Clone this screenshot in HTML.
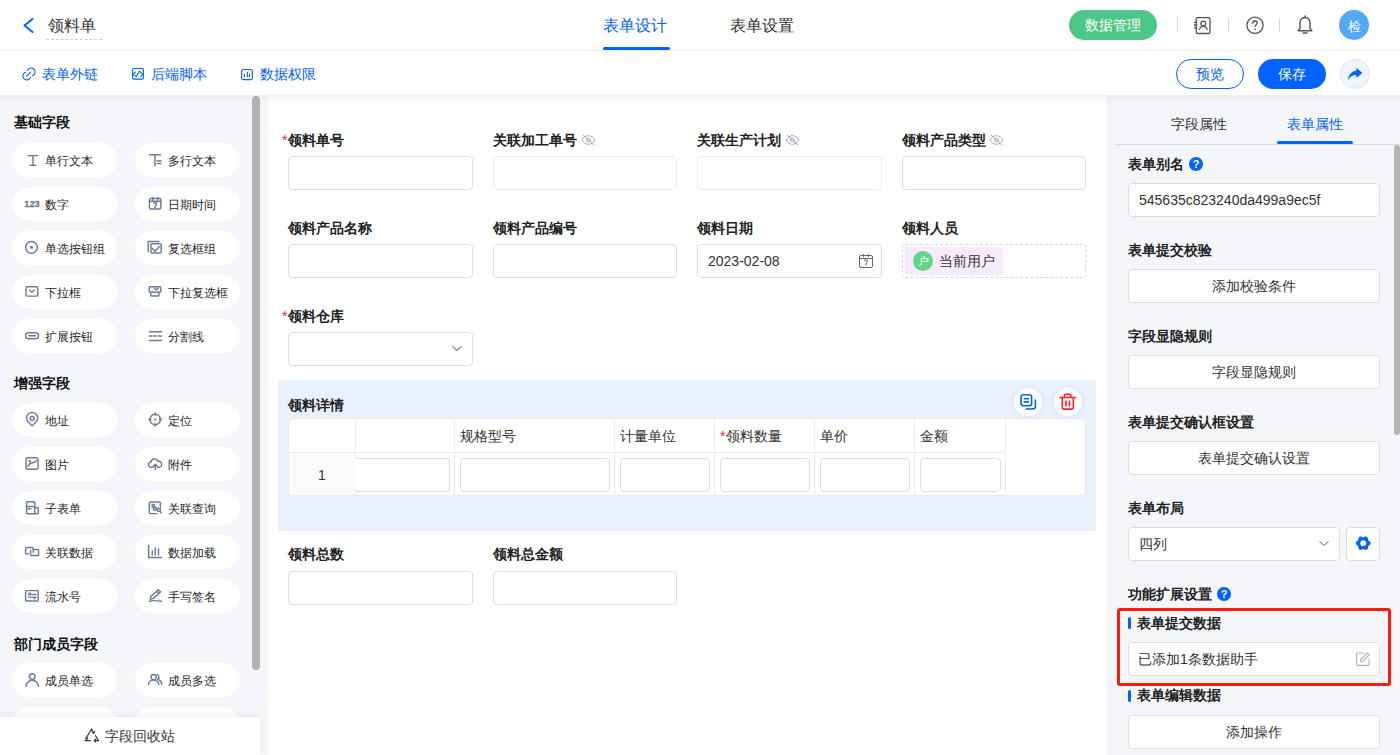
<!DOCTYPE html>
<html><head><meta charset="utf-8">
<style>
*{box-sizing:border-box;margin:0;padding:0}
html,body{width:1400px;height:755px;overflow:hidden;background:#fff;font-family:"Liberation Sans",sans-serif;color:#333}
.a{position:absolute}
.t14{font-size:14px;line-height:14px;white-space:nowrap}
.t12{font-size:12px;line-height:12px;white-space:nowrap}
.t16{font-size:16px;line-height:16px;white-space:nowrap}
.b{font-weight:bold}
svg{display:block}
/* header */
#hdr{left:0;top:0;width:1400px;height:51px;border-bottom:1px solid #ebebeb;background:#fff}
#tb{left:0;top:51px;width:1400px;height:44px;background:#fff}
.blue{color:#0062ff}
.sep{width:1px;height:14px;background:#d8d8d8;top:18px}
/* sidebar */
#side{left:0;top:95px;width:268px;height:660px;background:#f4f6fa}
.pill{width:105px;height:34px;border-radius:17px;background:#fff}
.pill .ic{position:absolute;left:13px;top:10px;width:14px;height:14px}
.pill .lb{position:absolute;left:33px;top:11px;font-size:12px;line-height:12px;color:#333;white-space:nowrap}
.stitle{font-size:14px;line-height:14px;font-weight:bold;color:#111;white-space:nowrap}
/* canvas */
#canvas{left:268px;top:95px;width:838px;height:660px;background:#fff}
.lbl{font-size:14px;line-height:14px;font-weight:bold;color:#222;white-space:nowrap}
.inp{height:34px;border:1px solid #dedede;border-radius:4px;background:#fff}
.plb{font-size:12px;line-height:12px;color:#1f1f1f;white-space:nowrap}
.req{font-size:14px;line-height:14px;color:#f5222d}
.rlbl{font-size:14px;line-height:14px;font-weight:bold;color:#222;white-space:nowrap}
/* right */
#right{left:1106px;top:95px;width:294px;height:660px;background:#f4f6fa}
.rbtn{left:1128px;width:252px;height:34px;border:1px solid #dedede;border-radius:4px;background:#fff;text-align:center;font-size:14px;line-height:32px;color:#333}
</style></head><body>

<!-- HEADER -->
<div id="hdr" class="a"></div>
<svg class="a" style="left:22px;top:17px" width="13" height="17" viewBox="0 0 13 17"><path d="M10.5 2 L2.5 8.5 L10.5 15" fill="none" stroke="#0062ff" stroke-width="2" stroke-linecap="round" stroke-linejoin="round"/></svg>
<div class="a t16" style="left:48px;top:18px;color:#333">领料单</div>
<div class="a" style="left:46px;top:39px;width:56px;height:1px;border-top:1px dashed #cfcfcf"></div>

<div class="a t16 blue" style="left:603px;top:18px">表单设计</div>
<div class="a" style="left:603px;top:47px;width:67px;height:3px;background:#0062ff;border-radius:2px"></div>
<div class="a t16" style="left:730px;top:18px;color:#333">表单设置</div>

<div class="a" style="left:1069px;top:10px;width:88px;height:30px;border-radius:15px;background:#4cc787"></div>
<div class="a t14" style="left:1085px;top:18px;color:#fff">数据管理</div>
<div class="a sep" style="left:1177px"></div>
<div class="a sep" style="left:1228px"></div>
<div class="a sep" style="left:1279px"></div>
<svg class="a" style="left:1193px;top:16px" width="20" height="19" viewBox="0 0 20 19" fill="none" stroke="#555" stroke-width="1.3"><rect x="3.3" y="1.6" width="13.7" height="15.9" rx="1.3"/><circle cx="10.3" cy="7.5" r="2.4"/><path d="M6.4 14c0.4-2.5 1.9-3.7 3.9-3.7s3.5 1.2 3.9 3.7"/><path d="M1 6.3h3.3M1 9h3.3M1 11.8h3.3"/></svg>
<svg class="a" style="left:1245px;top:16px" width="20" height="20" viewBox="0 0 20 20"><circle cx="10" cy="9.3" r="8.1" fill="none" stroke="#555" stroke-width="1.3"/><path d="M7.8 7.3c0-1.4 1-2.3 2.2-2.3s2.2 0.8 2.2 2.1c0 1.6-2.1 1.8-2.1 3.5" fill="none" stroke="#555" stroke-width="1.3" stroke-linecap="round"/><circle cx="10.1" cy="13.3" r="0.85" fill="#555"/></svg>
<svg class="a" style="left:1296px;top:15px" width="18" height="21" viewBox="0 0 18 21"><path d="M9 2.5c-3 0-5 2.3-5 5.3v5.5l-1.8 2.4h13.6L14 13.3V7.8C14 4.8 12 2.5 9 2.5z" fill="none" stroke="#555" stroke-width="1.4" stroke-linejoin="round"/><path d="M9 1v1.5M7 18h4" stroke="#555" stroke-width="1.4" stroke-linecap="round"/></svg>
<div class="a" style="left:1339px;top:10px;width:30px;height:30px;border-radius:15px;background:#52a9f3"></div>
<div class="a" style="left:1347.5px;top:19.5px;font-size:13px;line-height:13px;color:#fff">检</div>

<!-- TOOLBAR -->
<div id="tb" class="a"></div>
<svg class="a" style="left:22px;top:67px" width="14" height="14" viewBox="0 0 14 14" fill="none" stroke="#0062ff" stroke-width="1.1" stroke-linecap="round"><path d="M5.3 3.4A4 4 0 1 1 10.4 8.7"/><path d="M3.5 5.2A4 4 0 1 0 8.5 10.6"/><path d="M4.6 8.8L8.5 5.3"/></svg>
<div class="a t14 blue" style="left:42px;top:67px">表单外链</div>
<svg class="a" style="left:131px;top:67px" width="14" height="14" viewBox="0 0 14 14" fill="none" stroke="#0062ff" stroke-width="1.1" stroke-linecap="round" stroke-linejoin="round"><rect x="1.6" y="1.5" width="10.8" height="10.6" rx="1.3"/><path d="M4.5 5.2L2.1 7.4 5.3 9.6 8.4 4.2 12 7.4 9.5 9.6"/></svg>
<div class="a t14 blue" style="left:151px;top:67px">后端脚本</div>
<svg class="a" style="left:240px;top:67px" width="14" height="14" viewBox="0 0 14 14" fill="none" stroke="#0062ff" stroke-width="1.1" stroke-linecap="round"><rect x="1.6" y="2.5" width="10.8" height="10.1" rx="1.6"/><path d="M4.4 7.4v2.2M7.4 5.4v4.2M9.5 6.7v2.9"/></svg>
<div class="a t14 blue" style="left:260px;top:67px">数据权限</div>

<div class="a" style="left:1176px;top:59px;width:68px;height:30px;border-radius:15px;border:1px solid #0062ff;background:#fff"></div>
<div class="a t14 blue" style="left:1196px;top:67px">预览</div>
<div class="a" style="left:1258px;top:59px;width:68px;height:30px;border-radius:15px;background:#0062ff"></div>
<div class="a t14" style="left:1278px;top:67px;color:#fff;font-weight:500">保存</div>
<div class="a" style="left:1340px;top:59px;width:30px;height:30px;border-radius:15px;background:#f0f5ff;border:1px solid #dde7fb"></div>
<svg class="a" style="left:1347px;top:66px" width="16" height="16" viewBox="0 0 16 16"><path d="M9.4 1.7L15.3 6.9 9.4 12V8.9C5.5 8.9 2.8 10.5 1 14.2 1.6 9.3 4.5 5.2 9.4 4.6z" fill="#0062ff"/></svg>

<!-- SIDEBAR -->
<div id="side" class="a"></div>
<div class="a" style="left:252px;top:96px;width:8px;height:574px;border-radius:4px;background:#b3b3b3"></div>
<div class="a stitle" style="left:14px;top:115px">基础字段</div>
<div class="a pill" style="left:12px;top:143px"></div>
<div class="a pill" style="left:135px;top:143px"></div>
<svg class="a" style="left:20px;top:150px" width="25" height="20" viewBox="0 0 25 20" fill="none" stroke="#6e7c99" stroke-width="1.45" stroke-linecap="round" stroke-linejoin="round"><path d="M8 5.6h9.7M13 5.6v9.7M10.2 15.3h5.6"/></svg>
<div class="a plb" style="left:45px;top:155px">单行文本</div>
<svg class="a" style="left:143px;top:150px" width="25" height="20" viewBox="0 0 25 20" fill="none" stroke="#6e7c99" stroke-width="1.45" stroke-linecap="round" stroke-linejoin="round"><path d="M6.4 4.7h11.2M11.9 4.7v11M14 11h4.2M14 13.6h4.2"/></svg>
<div class="a plb" style="left:168px;top:155px">多行文本</div>
<div class="a pill" style="left:12px;top:187px"></div>
<div class="a pill" style="left:135px;top:187px"></div>
<svg class="a" style="left:20px;top:194px" width="25" height="20" viewBox="0 0 25 20" fill="none" stroke="#6e7c99" stroke-width="1.45" stroke-linecap="round" stroke-linejoin="round"><text x="4.2" y="12.8" font-family="Liberation Sans" font-weight="bold" font-size="9.4" fill="#6e7c99" stroke="#6e7c99" stroke-width="0.3">123</text></svg>
<div class="a plb" style="left:45px;top:199px">数字</div>
<svg class="a" style="left:143px;top:194px" width="25" height="20" viewBox="0 0 25 20" fill="none" stroke="#6e7c99" stroke-width="1.45" stroke-linecap="round" stroke-linejoin="round"><rect x="6.45" y="4.55" width="11.4" height="10.4" rx="1.5"/><path d="M6.45 7.3h11.4M9.8 3.4v2.4M14.8 3.4v2.4M10.6 9h3.2l-2 5"/></svg>
<div class="a plb" style="left:168px;top:199px">日期时间</div>
<div class="a pill" style="left:12px;top:231px"></div>
<div class="a pill" style="left:135px;top:231px"></div>
<svg class="a" style="left:20px;top:238px" width="25" height="20" viewBox="0 0 25 20" fill="none" stroke="#6e7c99" stroke-width="1.45" stroke-linecap="round" stroke-linejoin="round"><circle cx="11.5" cy="9.3" r="5.85"/><circle cx="11.5" cy="9.3" r="1.5" fill="#6e7c99" stroke="none"/></svg>
<div class="a plb" style="left:45px;top:243px">单选按钮组</div>
<svg class="a" style="left:143px;top:238px" width="25" height="20" viewBox="0 0 25 20" fill="none" stroke="#6e7c99" stroke-width="1.45" stroke-linecap="round" stroke-linejoin="round"><path d="M15.9 3.4H5.2v10.2"/><rect x="7.95" y="5.65" width="10.2" height="9.3" rx="1"/><path d="M9.3 10.6l2.8 2.6 4.2-4.7"/></svg>
<div class="a plb" style="left:168px;top:243px">复选框组</div>
<div class="a pill" style="left:12px;top:275px"></div>
<div class="a pill" style="left:135px;top:275px"></div>
<svg class="a" style="left:20px;top:282px" width="25" height="20" viewBox="0 0 25 20" fill="none" stroke="#6e7c99" stroke-width="1.45" stroke-linecap="round" stroke-linejoin="round"><rect x="6" y="4.7" width="11.8" height="9.4" rx="1"/><path d="M9.6 8.1l2.3 2.2 2.3-2.2"/></svg>
<div class="a plb" style="left:45px;top:287px">下拉框</div>
<svg class="a" style="left:143px;top:282px" width="25" height="20" viewBox="0 0 25 20" fill="none" stroke="#6e7c99" stroke-width="1.45" stroke-linecap="round" stroke-linejoin="round"><rect x="6.2" y="4.7" width="11.6" height="5.6" rx="1"/><path d="M11.4 6l1.9 1.9 1.9-1.9"/><path d="M7.7 10.3v2.7a1 1 0 0 0 1 1h6.3a1 1 0 0 0 1-1v-2.7"/></svg>
<div class="a plb" style="left:168px;top:287px">下拉复选框</div>
<div class="a pill" style="left:12px;top:319px"></div>
<div class="a pill" style="left:135px;top:319px"></div>
<svg class="a" style="left:20px;top:326px" width="25" height="20" viewBox="0 0 25 20" fill="none" stroke="#6e7c99" stroke-width="1.45" stroke-linecap="round" stroke-linejoin="round"><rect x="5.5" y="6.7" width="13.1" height="6.1" rx="3.05"/><path d="M8.8 9.75h6.7"/></svg>
<div class="a plb" style="left:45px;top:331px">扩展按钮</div>
<svg class="a" style="left:143px;top:326px" width="25" height="20" viewBox="0 0 25 20" fill="none" stroke="#6e7c99" stroke-width="1.45" stroke-linecap="round" stroke-linejoin="round"><path d="M6.3 5.7h12.2M6.3 14.4h12.2M6.3 10h2.6M10.8 10h2.6M15.3 10h3.2"/></svg>
<div class="a plb" style="left:168px;top:331px">分割线</div>
<div class="a stitle" style="left:14px;top:376px">增强字段</div>
<div class="a pill" style="left:12px;top:403px"></div>
<div class="a pill" style="left:135px;top:403px"></div>
<svg class="a" style="left:20px;top:410px" width="25" height="20" viewBox="0 0 25 20" fill="none" stroke="#6e7c99" stroke-width="1.45" stroke-linecap="round" stroke-linejoin="round"><path d="M12.1 15.8c-3.2-2.8-5.6-5.4-5.6-7.8a5.6 5.6 0 0 1 11.2 0c0 2.4-2.4 5-5.6 7.8z"/><circle cx="12.1" cy="8.4" r="2"/></svg>
<div class="a plb" style="left:45px;top:415px">地址</div>
<svg class="a" style="left:143px;top:410px" width="25" height="20" viewBox="0 0 25 20" fill="none" stroke="#6e7c99" stroke-width="1.45" stroke-linecap="round" stroke-linejoin="round"><circle cx="12.2" cy="9.5" r="5.2"/><path d="M12.2 3v2.2M12.2 13.8v2.2M5.7 9.5h2.2M16.5 9.5h2.2"/><circle cx="12.2" cy="9.5" r="1.1" fill="#6e7c99" stroke="none"/></svg>
<div class="a plb" style="left:168px;top:415px">定位</div>
<div class="a pill" style="left:12px;top:447px"></div>
<div class="a pill" style="left:135px;top:447px"></div>
<svg class="a" style="left:20px;top:454px" width="25" height="20" viewBox="0 0 25 20" fill="none" stroke="#6e7c99" stroke-width="1.45" stroke-linecap="round" stroke-linejoin="round"><rect x="6" y="3.7" width="12.1" height="11.6" rx="2"/><path d="M8 12.3c1-2.6 2.3-3.2 4.6-3.6 2-0.3 3.2-0.6 4.1-2"/><circle cx="9.8" cy="7.3" r="0.7" fill="#6e7c99"/></svg>
<div class="a plb" style="left:45px;top:459px">图片</div>
<svg class="a" style="left:143px;top:454px" width="25" height="20" viewBox="0 0 25 20" fill="none" stroke="#6e7c99" stroke-width="1.45" stroke-linecap="round" stroke-linejoin="round"><path d="M9.8 13.2H8.2a2.6 2.6 0 0 1-0.3-5.2 3.7 3.7 0 0 1 7.1-0.6 2.9 2.9 0 0 1 1.4 5.8h-1.7"/><path d="M12.3 15.5v-5M10.3 12.3l2-2 2 2"/></svg>
<div class="a plb" style="left:168px;top:459px">附件</div>
<div class="a pill" style="left:12px;top:491px"></div>
<div class="a pill" style="left:135px;top:491px"></div>
<svg class="a" style="left:20px;top:498px" width="25" height="20" viewBox="0 0 25 20" fill="none" stroke="#6e7c99" stroke-width="1.45" stroke-linecap="round" stroke-linejoin="round"><path d="M14.8 9V4.6a0.8 0.8 0 0 0-0.8-0.8H7.4a0.8 0.8 0 0 0-0.8 0.8v10.4a0.8 0.8 0 0 0 0.8 0.8h10.1a0.8 0.8 0 0 0 0.8-0.8V10.3a0.8 0.8 0 0 0-0.8-0.8h-2.7v6.3M6.6 8.4h8.2M8 10.8h2.8"/></svg>
<div class="a plb" style="left:45px;top:503px">子表单</div>
<svg class="a" style="left:143px;top:498px" width="25" height="20" viewBox="0 0 25 20" fill="none" stroke="#6e7c99" stroke-width="1.45" stroke-linecap="round" stroke-linejoin="round"><path d="M17.4 9.2V5a1 1 0 0 0-1-1H7.3a1 1 0 0 0-1 1v9.6a1 1 0 0 0 1 1h6.5"/><rect x="9.2" y="6.4" width="2.3" height="2.6"/><rect x="10.6" y="9.4" width="2.6" height="2.6"/><circle cx="15.8" cy="11.8" r="1.6"/><path d="M16.9 13l1.2 1.9"/></svg>
<div class="a plb" style="left:168px;top:503px">关联查询</div>
<div class="a pill" style="left:12px;top:535px"></div>
<div class="a pill" style="left:135px;top:535px"></div>
<svg class="a" style="left:20px;top:542px" width="25" height="20" viewBox="0 0 25 20" fill="none" stroke="#6e7c99" stroke-width="1.45" stroke-linecap="round" stroke-linejoin="round"><path d="M8.4 11.7H6.6a1 1 0 0 1-1-1V6.5a1 1 0 0 1 1-1h5.6a1 1 0 0 1 1 1v3.7"/><path d="M10.6 8.2v4.3a1 1 0 0 0 1 1h6a1 1 0 0 0 1-1V8.4a1 1 0 0 0-1-1h-4.4"/></svg>
<div class="a plb" style="left:45px;top:547px">关联数据</div>
<svg class="a" style="left:143px;top:542px" width="25" height="20" viewBox="0 0 25 20" fill="none" stroke="#6e7c99" stroke-width="1.45" stroke-linecap="round" stroke-linejoin="round"><path d="M5.6 3.5v12h12.9M9.3 9v4M12.3 6v7M15.5 7v6"/></svg>
<div class="a plb" style="left:168px;top:547px">数据加载</div>
<div class="a pill" style="left:12px;top:579px"></div>
<div class="a pill" style="left:135px;top:579px"></div>
<svg class="a" style="left:20px;top:586px" width="25" height="20" viewBox="0 0 25 20" fill="none" stroke="#6e7c99" stroke-width="1.45" stroke-linecap="round" stroke-linejoin="round"><rect x="5.6" y="4.6" width="12.6" height="10.3" rx="0.6"/><path d="M8.5 8.4h7.5M8.5 11.1h7.5M8.5 8.4l1.8-1.5M16 11.1l-1.8 1.5"/></svg>
<div class="a plb" style="left:45px;top:591px">流水号</div>
<svg class="a" style="left:143px;top:586px" width="25" height="20" viewBox="0 0 25 20" fill="none" stroke="#6e7c99" stroke-width="1.45" stroke-linecap="round" stroke-linejoin="round"><path d="M7.2 13.2l0.6-2.8 7.6-6.6 2.2 2.2-7.6 6.6z"/><path d="M13.6 5.4l2.2 2.2M6.6 15.2c3-1 6-0.8 12 0.1"/></svg>
<div class="a plb" style="left:168px;top:591px">手写签名</div>
<div class="a stitle" style="left:14px;top:637px">部门成员字段</div>
<div class="a pill" style="left:12px;top:663px"></div>
<div class="a pill" style="left:135px;top:663px"></div>
<svg class="a" style="left:20px;top:670px" width="25" height="20" viewBox="0 0 25 20" fill="none" stroke="#6e7c99" stroke-width="1.45" stroke-linecap="round" stroke-linejoin="round"><circle cx="12.2" cy="6.6" r="2.8"/><path d="M6.1 16.3a6.1 6.1 0 0 1 12.2 0"/></svg>
<div class="a plb" style="left:45px;top:675px">成员单选</div>
<svg class="a" style="left:143px;top:670px" width="25" height="20" viewBox="0 0 25 20" fill="none" stroke="#6e7c99" stroke-width="1.45" stroke-linecap="round" stroke-linejoin="round"><circle cx="10.7" cy="7" r="2.6"/><path d="M5.5 14.6a5.2 5.2 0 0 1 10.3 0M14.3 4.6a2.6 2.6 0 0 1 0.2 4.8M16 9.9a5.2 5.2 0 0 1 2.8 4.7"/></svg>
<div class="a plb" style="left:168px;top:675px">成员多选</div>
<div class="a pill" style="left:12px;top:707px"></div>
<div class="a pill" style="left:135px;top:707px"></div>
<div class="a" style="left:0;top:717px;width:260px;height:38px;background:#fff;box-shadow:0 -2px 6px rgba(0,0,0,0.06)"></div>
<svg class="a" style="left:84px;top:727px" width="16" height="16" viewBox="0 0 16 16" fill="none" stroke="#333" stroke-width="1.1" stroke-linejoin="round" stroke-linecap="round"><path d="M3.2 9.4L7.5 2 9.9 6.1M8.2 5.7l1.7 0.4 0.5-1.6M11.5 8.6L14.5 13.6H10.2M11.6 12.2l-1.4 1.4 1.4 1.3M6.4 13.6H1.2L3 10.5M1.6 10.2l1.4 0.3 0.5 1.4"/></svg>
<div class="a" style="left:105px;top:729px;font-size:14px;line-height:14px;color:#333">字段回收站</div>

<!-- CANVAS -->
<div id="canvas" class="a"></div>
<div class="a req" style="left:282px;top:133px">*</div><div class="a lbl" style="left:288px;top:133px">领料单号</div>
<div class="a lbl" style="left:493px;top:133px">关联加工单号</div><svg class="a" style="left:581px;top:134px" width="15" height="12" viewBox="0 0 15 12" fill="none" stroke="#a3acbf" stroke-width="1"><path d="M1 6c1.6-2.8 3.8-4.3 6.5-4.3S12.4 3.2 14 6c-1.6 2.8-3.8 4.3-6.5 4.3S2.6 8.8 1 6z"/><circle cx="7.5" cy="6" r="1.9"/><path d="M2 1l11 10"/></svg>
<div class="a lbl" style="left:697px;top:133px">关联生产计划</div><svg class="a" style="left:785px;top:134px" width="15" height="12" viewBox="0 0 15 12" fill="none" stroke="#a3acbf" stroke-width="1"><path d="M1 6c1.6-2.8 3.8-4.3 6.5-4.3S12.4 3.2 14 6c-1.6 2.8-3.8 4.3-6.5 4.3S2.6 8.8 1 6z"/><circle cx="7.5" cy="6" r="1.9"/><path d="M2 1l11 10"/></svg>
<div class="a lbl" style="left:902px;top:133px">领料产品类型</div><svg class="a" style="left:989px;top:134px" width="15" height="12" viewBox="0 0 15 12" fill="none" stroke="#a3acbf" stroke-width="1"><path d="M1 6c1.6-2.8 3.8-4.3 6.5-4.3S12.4 3.2 14 6c-1.6 2.8-3.8 4.3-6.5 4.3S2.6 8.8 1 6z"/><circle cx="7.5" cy="6" r="1.9"/><path d="M2 1l11 10"/></svg>
<div class="a inp" style="left:288px;top:156px;width:185px;"></div>
<div class="a inp" style="left:493px;top:156px;width:184px;border-color:#ededed;"></div>
<div class="a inp" style="left:697px;top:156px;width:185px;border-color:#ededed;"></div>
<div class="a inp" style="left:902px;top:156px;width:184px;"></div>
<div class="a lbl" style="left:288px;top:221px">领料产品名称</div>
<div class="a lbl" style="left:493px;top:221px">领料产品编号</div>
<div class="a lbl" style="left:697px;top:221px">领料日期</div>
<div class="a lbl" style="left:902px;top:221px">领料人员</div>
<div class="a inp" style="left:288px;top:244px;width:185px"></div>
<div class="a inp" style="left:493px;top:244px;width:184px"></div>
<div class="a inp" style="left:697px;top:244px;width:185px"></div>
<div class="a" style="left:708px;top:254px;font-size:14px;line-height:14px;color:#333">2023-02-08</div>
<svg class="a" style="left:857px;top:253px" width="17" height="16" viewBox="0 0 17 16" fill="none" stroke="#666" stroke-width="1"><rect x="2.5" y="2.5" width="13" height="12" rx="1.5"/><path d="M2.5 5.5h13M6.5 1v3M11.5 1v3M7 7.2h3.5l-1.8 5.3"/></svg>
<div class="a" style="left:902px;top:244px;width:184px;height:34px;border:1px dashed #d9d9d9;border-radius:3px"></div>
<div class="a" style="left:905px;top:247px;width:98px;height:28px;border-radius:2px;background:#f6eafd"></div>
<div class="a" style="left:913px;top:251px;width:20px;height:20px;border-radius:10px;background:#5fd48a"></div>
<div class="a" style="left:918px;top:256px;font-size:11px;line-height:11px;color:#fff">户</div>
<div class="a" style="left:939px;top:254px;font-size:14px;line-height:14px;color:#333">当前用户</div>
<div class="a req" style="left:282px;top:309px">*</div><div class="a lbl" style="left:288px;top:309px">领料仓库</div>
<div class="a inp" style="left:288px;top:332px;width:185px"></div>
<svg class="a" style="left:450px;top:343px" width="14" height="10" viewBox="0 0 14 10" fill="none" stroke="#888" stroke-width="1.2"><path d="M2.5 3.2l4.5 4.3 4.5-4.3"/></svg>
<div class="a" style="left:278px;top:380px;width:818px;height:151px;background:#e9f1fe"></div>
<div class="a lbl" style="left:288px;top:398px">领料详情</div>
<div class="a" style="left:1014px;top:388px;width:28px;height:28px;border-radius:14px;background:#fff;box-shadow:0 0 4px rgba(0,80,255,0.12)"></div>
<div class="a" style="left:1054px;top:388px;width:28px;height:28px;border-radius:14px;background:#fff;box-shadow:0 0 4px rgba(0,80,255,0.12)"></div>
<svg class="a" style="left:1014px;top:388px" width="28" height="28" viewBox="0 0 28 28" fill="none" stroke="#0062ff" stroke-width="1.6" stroke-linecap="round"><rect x="7" y="6.8" width="10.6" height="11" rx="2.2"/><path d="M10.4 10.7h4M10.4 13.9h4M21.4 12v6.6a2.4 2.4 0 0 1-2.4 2.4h-6.8"/></svg>
<svg class="a" style="left:1054px;top:388px" width="28" height="28" viewBox="0 0 28 28" fill="none" stroke="#f5222d" stroke-width="1.6" stroke-linecap="round" stroke-linejoin="round"><path d="M6 9.5h15.6M10.5 9.5V7.8a1.5 1.5 0 0 1 1.5-1.5h3.5a1.5 1.5 0 0 1 1.5 1.5v1.7M8.3 9.5v10a1.6 1.6 0 0 0 1.6 1.6h7.8a1.6 1.6 0 0 0 1.6-1.6v-10M12 13v5M15.4 13v5"/></svg>
<div class="a" style="left:288px;top:418px;width:798px;height:78px;background:#fff;border:1px solid #ebebeb;border-radius:4px"></div>
<div class="a" style="left:289px;top:452px;width:66px;height:43px;background:#fafafa;border-bottom-left-radius:3px"></div>
<div class="a" style="left:318px;top:468px;font-size:14px;line-height:14px;color:#333">1</div>
<div class="a" style="left:355px;top:420px;width:1px;height:75px;background:#ebebeb"></div>
<div class="a" style="left:454px;top:420px;width:1px;height:75px;background:#ebebeb"></div>
<div class="a" style="left:614px;top:420px;width:1px;height:75px;background:#ebebeb"></div>
<div class="a" style="left:714px;top:420px;width:1px;height:75px;background:#ebebeb"></div>
<div class="a" style="left:814px;top:420px;width:1px;height:75px;background:#ebebeb"></div>
<div class="a" style="left:914px;top:420px;width:1px;height:75px;background:#ebebeb"></div>
<div class="a" style="left:1005px;top:420px;width:1px;height:75px;background:#ebebeb"></div>
<div class="a" style="left:289px;top:452px;width:716px;height:1px;background:#ebebeb"></div>
<div class="a" style="left:460px;top:429px;font-size:14px;line-height:14px;color:#333">规格型号</div>
<div class="a" style="left:620px;top:429px;font-size:14px;line-height:14px;color:#333">计量单位</div>
<div class="a req" style="left:720px;top:429px;font-weight:normal">*</div>
<div class="a" style="left:726px;top:429px;font-size:14px;line-height:14px;color:#333">领料数量</div>
<div class="a" style="left:820px;top:429px;font-size:14px;line-height:14px;color:#333">单价</div>
<div class="a" style="left:920px;top:429px;font-size:14px;line-height:14px;color:#333">金额</div>
<div class="a" style="left:355px;top:458px;width:95px;height:34px;border:1px solid #dedede;border-left:none;border-radius:0 4px 4px 0;background:#fff"></div>
<div class="a inp" style="left:460px;top:458px;width:150px"></div>
<div class="a inp" style="left:620px;top:458px;width:90px"></div>
<div class="a inp" style="left:720px;top:458px;width:90px"></div>
<div class="a inp" style="left:820px;top:458px;width:90px"></div>
<div class="a inp" style="left:920px;top:458px;width:81px"></div>
<div class="a lbl" style="left:288px;top:547px">领料总数</div>
<div class="a lbl" style="left:493px;top:547px">领料总金额</div>
<div class="a inp" style="left:288px;top:571px;width:185px"></div>
<div class="a inp" style="left:493px;top:571px;width:184px"></div>

<!-- RIGHT -->
<div id="right" class="a"></div>
<div class="a" style="left:1171px;top:117px;font-size:14px;line-height:14px;color:#333">字段属性</div>
<div class="a" style="left:1287px;top:117px;font-size:14px;line-height:14px;color:#0062ff">表单属性</div>
<div class="a" style="left:1114px;top:144px;width:286px;height:1px;background:#dedede"></div>
<div class="a" style="left:1277px;top:141px;width:76px;height:3px;border-radius:1.5px;background:#0062ff"></div>
<div class="a" style="left:1394px;top:145px;width:6px;height:290px;border-radius:3px;background:#b4b4b4"></div>
<div class="a rlbl" style="left:1128px;top:157px">表单别名</div>
<div class="a" style="left:1189px;top:157px;width:14px;height:14px;border-radius:7px;background:#0062ff;color:#fff;font-size:11px;line-height:14px;font-weight:bold;text-align:center">?</div>
<div class="a inp" style="left:1128px;top:183px;width:252px;height:34px"></div>
<div class="a" style="left:1139px;top:193px;font-size:14px;line-height:14px;color:#333">545635c823240da499a9ec5f</div>
<div class="a rlbl" style="left:1128px;top:243px">表单提交校验</div>
<div class="a rbtn" style="top:269px">添加校验条件</div>
<div class="a rlbl" style="left:1128px;top:329px">字段显隐规则</div>
<div class="a rbtn" style="top:355px">字段显隐规则</div>
<div class="a rlbl" style="left:1128px;top:415px">表单提交确认框设置</div>
<div class="a rbtn" style="top:441px">表单提交确认设置</div>
<div class="a rlbl" style="left:1128px;top:501px">表单布局</div>
<div class="a inp" style="left:1128px;top:527px;width:212px;height:34px"></div>
<div class="a" style="left:1139px;top:537px;font-size:14px;line-height:14px;color:#333">四列</div>
<svg class="a" style="left:1317px;top:538px" width="14" height="12" viewBox="0 0 14 12" fill="none" stroke="#888" stroke-width="1.1"><path d="M2.5 3.3l4.5 4 4.5-4"/></svg>
<div class="a inp" style="left:1346px;top:527px;width:34px;height:34px"></div>
<svg class="a" style="left:1354px;top:535px" width="18" height="18" viewBox="0 0 18 18"><path d="M15.50 8.20 L12.35 13.66 L6.05 13.66 L2.90 8.20 L6.05 2.74 L12.35 2.74z" fill="#0062ff" stroke="#0062ff" stroke-width="2.3" stroke-linejoin="round"/><circle cx="9.2" cy="8.2" r="2.9" fill="#fff"/><circle cx="15.26" cy="11.70" r="1.25" fill="#fff"/><circle cx="9.20" cy="15.20" r="1.25" fill="#fff"/><circle cx="3.14" cy="11.70" r="1.25" fill="#fff"/><circle cx="3.14" cy="4.70" r="1.25" fill="#fff"/><circle cx="9.20" cy="1.20" r="1.25" fill="#fff"/><circle cx="15.26" cy="4.70" r="1.25" fill="#fff"/></svg>
<div class="a rlbl" style="left:1128px;top:587px">功能扩展设置</div>
<div class="a" style="left:1217px;top:587px;width:14px;height:14px;border-radius:7px;background:#0062ff;color:#fff;font-size:11px;line-height:14px;font-weight:bold;text-align:center">?</div>
<div class="a" style="left:1117px;top:608px;width:274px;height:78px;border:3px solid #ff1a0e;border-radius:3px"></div>
<div class="a" style="left:1128px;top:617px;width:3px;height:12px;border-radius:1.5px;background:#0062ff"></div>
<div class="a rlbl" style="left:1137px;top:616px">表单提交数据</div>
<div class="a inp" style="left:1128px;top:642px;width:252px;height:34px"></div>
<div class="a" style="left:1138px;top:652px;font-size:14px;line-height:14px;color:#333">已添加1条数据助手</div>
<svg class="a" style="left:1355px;top:651px" width="16" height="16" viewBox="0 0 16 16" fill="none" stroke="#aab3c8" stroke-width="1.1"><path d="M8.5 2H2.6a1 1 0 0 0-1 1v10.4a1 1 0 0 0 1 1H13a1 1 0 0 0 1-1V7.5"/><path d="M5.6 10.6l0.4-2.3 6.3-6.3 1.9 1.9-6.3 6.3z"/></svg>
<div class="a" style="left:1128px;top:690px;width:3px;height:12px;border-radius:1.5px;background:#0062ff"></div>
<div class="a rlbl" style="left:1137px;top:688px">表单编辑数据</div>
<div class="a rbtn" style="top:715px">添加操作</div>

<div class="a" style="left:0;top:95px;width:1400px;height:10px;background:linear-gradient(rgba(0,0,0,0.035),rgba(0,0,0,0))"></div>
</body></html>
